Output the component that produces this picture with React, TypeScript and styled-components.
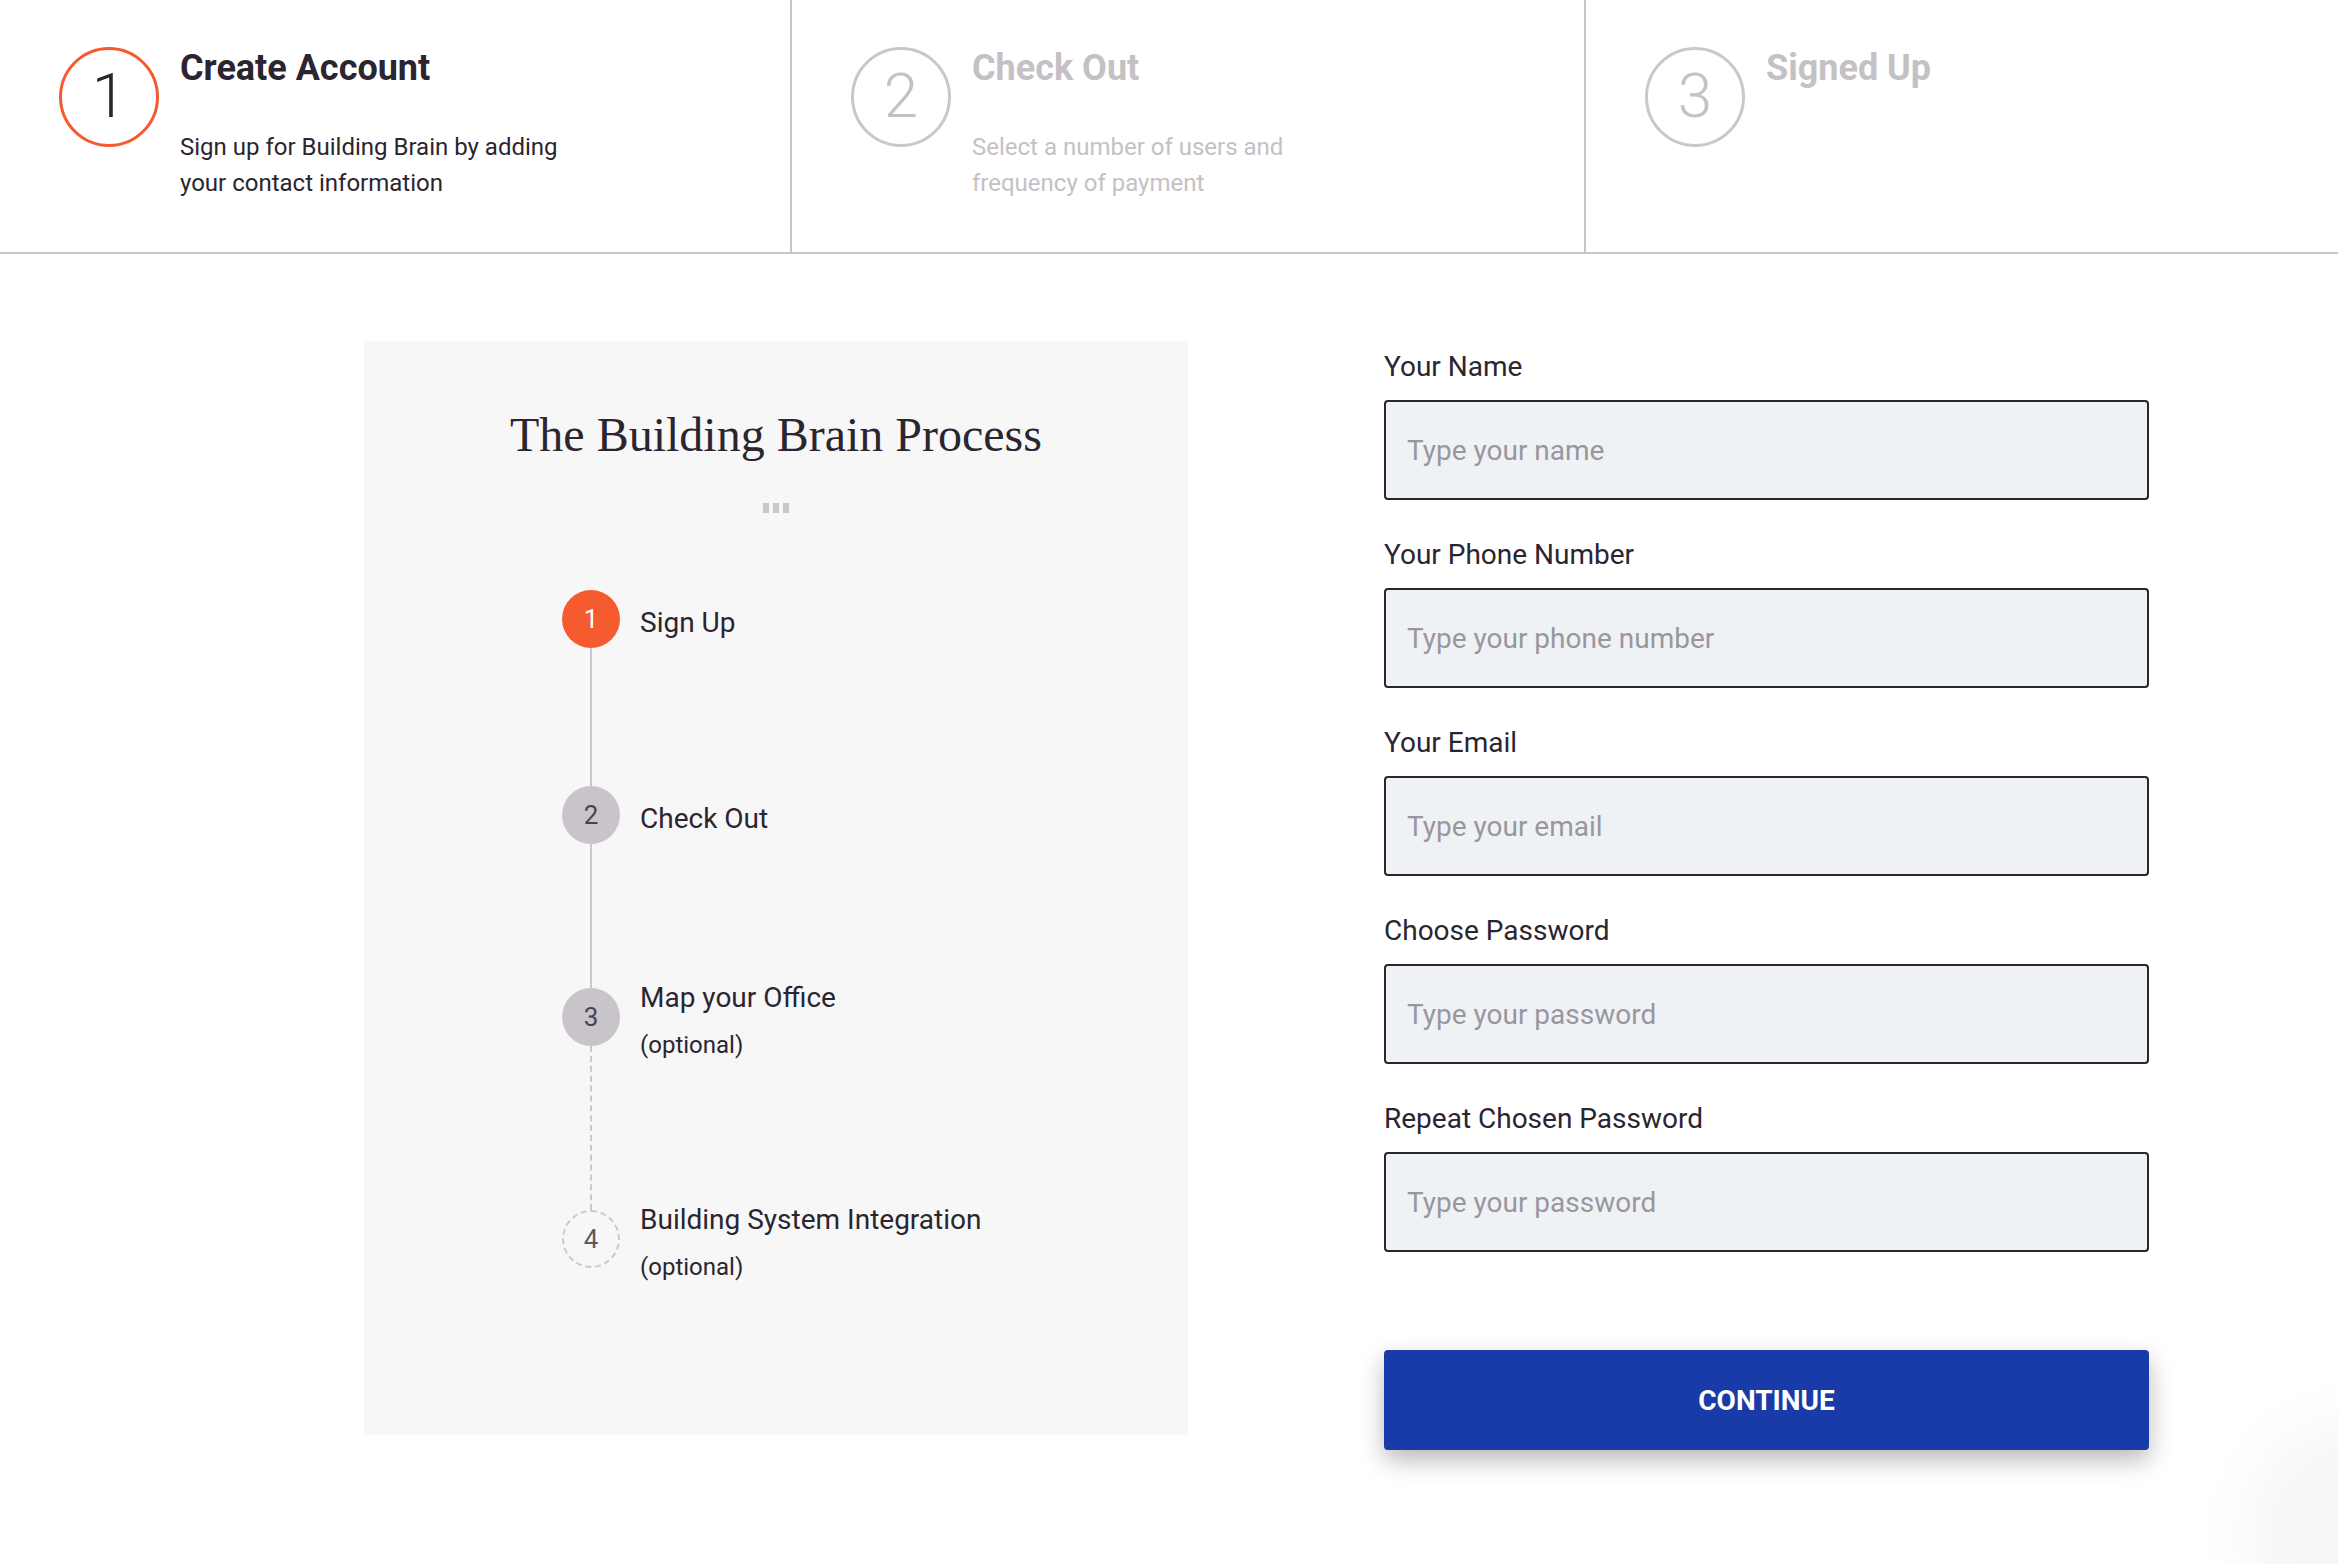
import React from "react";
import styled, { createGlobalStyle, css } from "styled-components";

const GlobalStyle = createGlobalStyle`
  html, body {
    margin: 0;
    padding: 0;
    background: #ffffff;
    font-family: Roboto, "Liberation Sans", Arial, sans-serif;
    color: #2b2530;
    overflow: hidden;
  }
  * { box-sizing: border-box; }
`;

const Page = styled.div`
  width: 2338px;
  min-height: 1564px;
`;

/* ---------- Header stepper ---------- */
const Header = styled.header`
  display: grid;
  grid-template-columns: 792px 794px 1fr;
  height: 254px;
  border-bottom: 2px solid #c6c6c6;
`;

const HeaderStep = styled.div<{ $last?: boolean }>`
  display: flex;
  align-items: flex-start;
  gap: 21px;
  padding: 47px 0 0 59px;
  border-right: ${(p) => (p.$last ? "none" : "2px solid #c6c6c6")};
`;

const StepCircle = styled.div<{ $active?: boolean }>`
  flex: none;
  width: 100px;
  height: 100px;
  border-radius: 50%;
  border: 3px solid ${(p) => (p.$active ? "#f45a2f" : "#c9c7ca")};
  display: flex;
  align-items: center;
  justify-content: center;
  font-size: 62px;
  font-weight: 300;
  line-height: 1;
  color: ${(p) => (p.$active ? "#2b2530" : "#c4c2c5")};
  padding-bottom: 2px;
`;

const StepText = styled.div`
  display: flex;
  flex-direction: column;
`;

const StepTitle = styled.div<{ $active?: boolean }>`
  font-size: 36px;
  font-weight: 700;
  line-height: 44px;
  margin-top: -1px;
  color: ${(p) => (p.$active ? "#2b2530" : "#c4c1c5")};
`;

const StepDesc = styled.div<{ $active?: boolean }>`
  margin-top: 39px;
  max-width: 400px;
  font-size: 24px;
  line-height: 36px;
  color: ${(p) => (p.$active ? "#2b2530" : "#c4c1c5")};
`;

/* ---------- Main ---------- */
const Main = styled.main`
  display: flex;
  align-items: flex-start;
  gap: 196px;
  padding: 87px 0 0 364px;
`;

const ProcessPanel = styled.section`
  width: 824px;
  background: #f7f7f7;
  padding: 66px 0 167px 0;
  display: flex;
  flex-direction: column;
`;

const ProcessTitle = styled.h2`
  margin: 0;
  text-align: center;
  font-family: "Liberation Serif", "Times New Roman", serif;
  font-weight: 400;
  font-size: 48px;
  line-height: 56px;
  color: #2b2530;
`;

const Dots = styled.div`
  margin-top: 40px;
  display: flex;
  justify-content: center;
  gap: 4px;
`;

const Dot = styled.span`
  width: 6px;
  height: 10px;
  background: #cbc5cc;
`;

const Timeline = styled.div`
  margin-top: 77px;
  padding-left: 198px;
  display: flex;
  flex-direction: column;
`;

const TimelineRow = styled.div`
  display: flex;
  align-items: center;
  gap: 20px;
  height: 58px;
`;

const Bullet = styled.div<{ $kind: "active" | "done" | "optional" }>`
  flex: none;
  width: 58px;
  height: 58px;
  border-radius: 50%;
  display: flex;
  align-items: center;
  justify-content: center;
  font-size: 26px;
  line-height: 1;
  ${(p) =>
    p.$kind === "active"
      ? css`
          background: #f65a2f;
          color: #ffffff;
        `
      : p.$kind === "done"
      ? css`
          background: #c9c3ca;
          color: #48434e;
        `
      : css`
          background: transparent;
          border: 2px dashed #cdc9ce;
          color: #5d5862;
        `}
`;

const Connector = styled.div<{ $dashed?: boolean; $h: number }>`
  margin-left: 28px;
  width: 0;
  height: ${(p) => p.$h}px;
  border-left: 2px ${(p) => (p.$dashed ? "dashed" : "solid")} #cbc7cc;
`;

const RowLabel = styled.div`
  display: flex;
  flex-direction: column;
  padding-top: 8px;
`;

const RowTitle = styled.div`
  font-size: 28px;
  line-height: 32px;
  color: #2b2530;
  white-space: nowrap;
`;

const RowSub = styled.div`
  margin-top: 15px;
  font-size: 24px;
  line-height: 32px;
  color: #2b2530;
`;

/* ---------- Form ---------- */
const Form = styled.form`
  width: 765px;
  margin-top: 11px;
  display: flex;
  flex-direction: column;
`;

const Field = styled.div`
  display: flex;
  flex-direction: column;
  gap: 18px;
  margin-bottom: 40px;
`;

const Label = styled.label`
  font-size: 28px;
  line-height: 30px;
  color: #2b2530;
`;

const Input = styled.input`
  height: 100px;
  width: 100%;
  border: 2px solid #2b2530;
  border-radius: 4px;
  background: #eff2f5;
  padding: 0 21px;
  font-family: Roboto, "Liberation Sans", Arial, sans-serif;
  font-size: 28px;
  color: #2b2530;
  outline: none;
  &::placeholder {
    color: #9b969d;
  }
`;

const ContinueButton = styled.button`
  margin-top: 58px;
  height: 100px;
  width: 100%;
  border: none;
  border-radius: 4px;
  background: #193ba9;
  color: #ffffff;
  font-family: Roboto, "Liberation Sans", Arial, sans-serif;
  font-weight: 700;
  font-size: 28px;
  box-shadow: 0 10px 24px rgba(0, 0, 0, 0.28);
  cursor: pointer;
`;

const ChatGlow = styled.div`
  position: fixed;
  right: -110px;
  bottom: -80px;
  width: 200px;
  height: 220px;
  border-radius: 50%;
  background: rgba(0, 0, 0, 0.035);
  filter: blur(28px);
  pointer-events: none;
`;

const headerSteps = [
  {
    n: 1,
    title: "Create Account",
    desc: "Sign up for Building Brain by adding your contact information",
    active: true,
  },
  {
    n: 2,
    title: "Check Out",
    desc: "Select a number of users and frequency of payment",
    active: false,
  },
  { n: 3, title: "Signed Up", desc: "", active: false },
];

const fields = [
  { label: "Your Name", placeholder: "Type your name", type: "text" },
  { label: "Your Phone Number", placeholder: "Type your phone number", type: "tel" },
  { label: "Your Email", placeholder: "Type your email", type: "email" },
  { label: "Choose Password", placeholder: "Type your password", type: "password" },
  { label: "Repeat Chosen Password", placeholder: "Type your password", type: "password" },
];

export default function App() {
  return (
    <Page>
      <GlobalStyle />
      <Header>
        {headerSteps.map((s, i) => (
          <HeaderStep key={s.n} $last={i === headerSteps.length - 1}>
            <StepCircle $active={s.active}>{s.n}</StepCircle>
            <StepText>
              <StepTitle $active={s.active}>{s.title}</StepTitle>
              {s.desc && <StepDesc $active={s.active}>{s.desc}</StepDesc>}
            </StepText>
          </HeaderStep>
        ))}
      </Header>

      <Main>
        <ProcessPanel>
          <ProcessTitle>The Building Brain Process</ProcessTitle>
          <Dots>
            <Dot />
            <Dot />
            <Dot />
          </Dots>
          <Timeline>
            <TimelineRow>
              <Bullet $kind="active">1</Bullet>
              <RowLabel>
                <RowTitle>Sign Up</RowTitle>
              </RowLabel>
            </TimelineRow>
            <Connector $h={138} />
            <TimelineRow>
              <Bullet $kind="done">2</Bullet>
              <RowLabel>
                <RowTitle>Check Out</RowTitle>
              </RowLabel>
            </TimelineRow>
            <Connector $h={144} />
            <TimelineRow>
              <Bullet $kind="done">3</Bullet>
              <RowLabel>
                <RowTitle>Map your Office</RowTitle>
                <RowSub>(optional)</RowSub>
              </RowLabel>
            </TimelineRow>
            <Connector $h={164} $dashed />
            <TimelineRow>
              <Bullet $kind="optional">4</Bullet>
              <RowLabel>
                <RowTitle>Building System Integration</RowTitle>
                <RowSub>(optional)</RowSub>
              </RowLabel>
            </TimelineRow>
          </Timeline>
        </ProcessPanel>

        <Form onSubmit={(e) => e.preventDefault()}>
          {fields.map((f) => (
            <Field key={f.label}>
              <Label>{f.label}</Label>
              <Input type={f.type} placeholder={f.placeholder} />
            </Field>
          ))}
          <ContinueButton type="submit">CONTINUE</ContinueButton>
        </Form>
      </Main>
      <ChatGlow />
    </Page>
  );
}
